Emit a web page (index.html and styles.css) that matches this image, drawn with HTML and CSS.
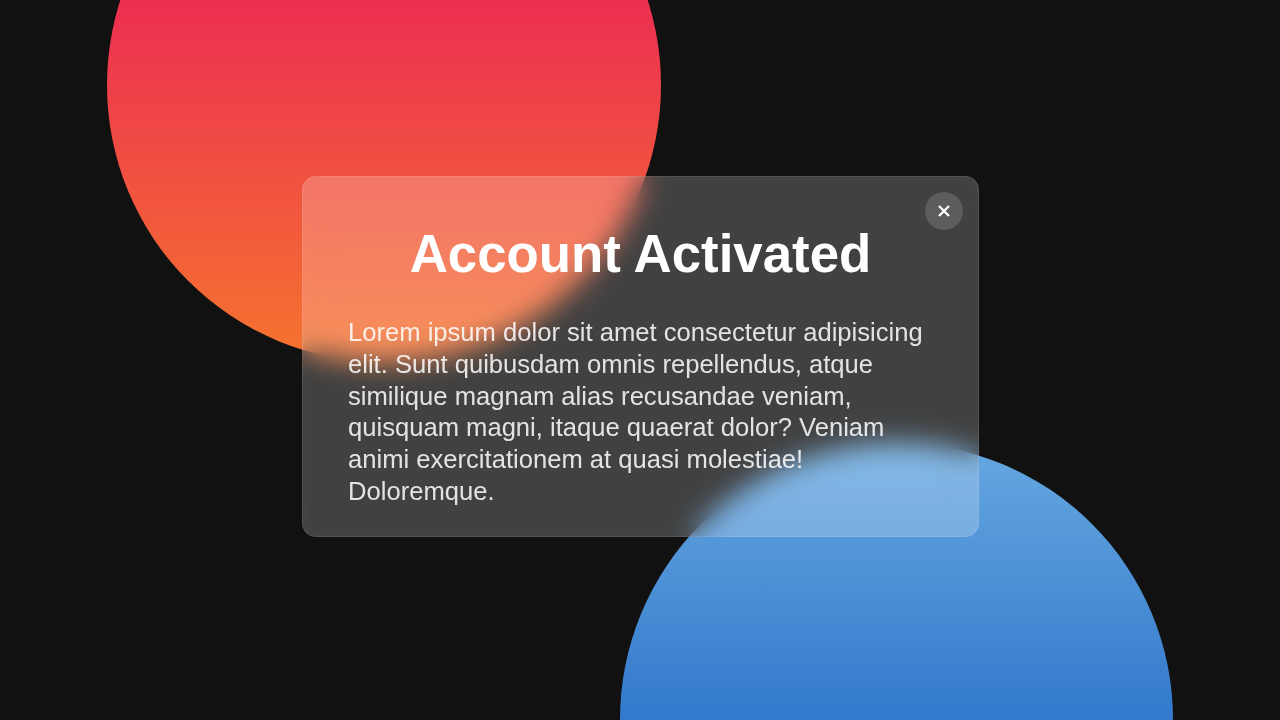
FILE: index.html
```html
<!DOCTYPE html>
<html lang="en">
<head>
    <meta charset="UTF-8">
    <meta name="viewport" content="width=device-width, initial-scale=1.0">
    <title>Account Activated</title>
    <link rel="stylesheet" href="styles.css">
</head>
<body>
    <div class="stage">
        <div class="circle circle-red"></div>
        <div class="circle circle-blue"></div>

        <div class="modal">
            <button class="close" aria-label="Close">
                <svg viewBox="0 0 14 14" width="14" height="14">
                    <path d="M2 2 12 12M12 2 2 12"></path>
                </svg>
            </button>
            <h1>Account Activated</h1>
            <p>Lorem ipsum dolor sit amet consectetur adipisicing elit. Sunt quibusdam omnis repellendus, atque similique magnam alias recusandae veniam, quisquam magni, itaque quaerat dolor? Veniam animi exercitationem at quasi molestiae! Doloremque.</p>
        </div>
    </div>
</body>
</html>
```

FILE: styles.css
```css
* { box-sizing: border-box; }
body { margin: 0; padding: 0; background-color: #111; font-family: "Liberation Sans", Arial, sans-serif; }

.stage { position: relative; width: 1280px; height: 720px; overflow: hidden; display: flex; align-items: center; justify-content: center; padding: 0 0 7px 1px; }

.circle { position: absolute; width: 554px; height: 554px; border-radius: 50%; }
.circle-red { left: 107px; top: -192px; background: linear-gradient(to bottom, #e80a65, #f5742e); }
.circle-blue { left: 620px; top: 443px; width: 553px; height: 553px; background: linear-gradient(to bottom, #66a8e0, #004ab8); }

.modal { position: relative; width: 677px; height: 361px; padding: 47px 45px 0; border: 1px solid rgba(255, 255, 255, 0.09); border-radius: 14px; background-color: rgba(255, 255, 255, 0.205); backdrop-filter: blur(14px); color: white; box-shadow: inset 0 0 18px rgba(255, 255, 255, 0.03); }

.modal h1 { margin: 0 0 33px; font-size: 52.8px; line-height: 60px; font-weight: bold; text-align: center; }
.modal p { margin: 0; font-size: 25.6px; line-height: 31.8px; color: rgba(255, 255, 255, 0.86); }

.close { position: absolute; top: 15px; right: 15px; width: 38px; height: 38px; padding: 0; border: none; border-radius: 50%; background-color: rgba(255, 255, 255, 0.15); display: flex; align-items: center; justify-content: center; }
.close path { fill: none; stroke: white; stroke-width: 2.2; }
```
